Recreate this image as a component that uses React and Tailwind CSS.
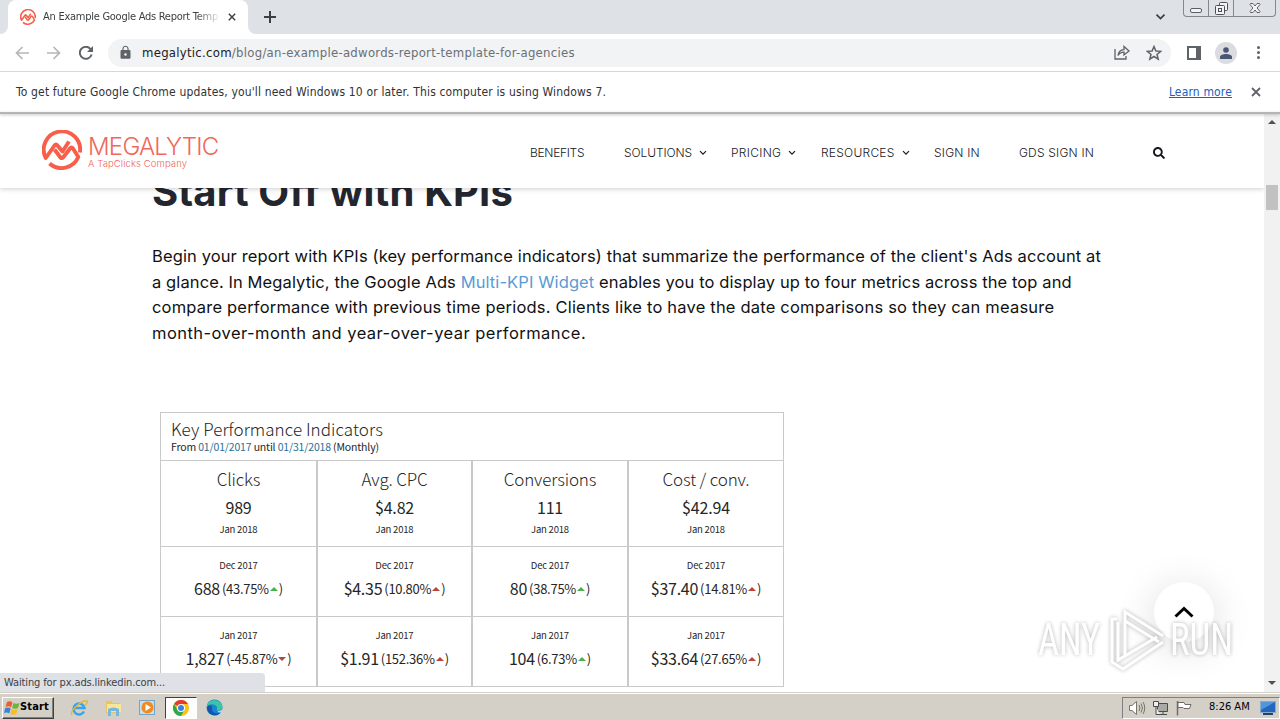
import { FaSearch } from 'react-icons/fa';
import { MdLock } from 'react-icons/md';

const navItems = [
  { label: 'BENEFITS', box: 'w-[94px]', track: 'tracking-[-0.3px]' },
  { label: 'SOLUTIONS', box: 'w-[107px]', menu: true, track: 'tracking-[-0.1px]' },
  { label: 'PRICING', box: 'w-[90px]', menu: true, track: 'tracking-[0.3px]' },
  { label: 'RESOURCES', box: 'w-[113px]', menu: true, track: 'tracking-[0.25px]' },
  { label: 'SIGN IN', box: 'w-[85px]', track: 'tracking-[0.2px]' },
  { label: 'GDS SIGN IN', box: 'w-[134px]', track: 'tracking-[0.2px]' },
];

const kpis = [
  {
    name: 'Clicks',
    value: '989',
    prev: { value: '688', pct: '43.75%', dir: 'up', color: '#4caf50' },
    year: { value: '1,827', pct: '-45.87%', dir: 'down', color: '#b5463f' },
  },
  {
    name: 'Avg. CPC',
    value: '$4.82',
    prev: { value: '$4.35', pct: '10.80%', dir: 'up', color: '#c0443c' },
    year: { value: '$1.91', pct: '152.36%', dir: 'up', color: '#c0443c' },
  },
  {
    name: 'Conversions',
    value: '111',
    prev: { value: '80', pct: '38.75%', dir: 'up', color: '#4caf50' },
    year: { value: '104', pct: '6.73%', dir: 'up', color: '#4caf50' },
  },
  {
    name: 'Cost / conv.',
    value: '$42.94',
    prev: { value: '$37.40', pct: '14.81%', dir: 'up', color: '#c0443c' },
    year: { value: '$33.64', pct: '27.65%', dir: 'up', color: '#c0443c' },
  },
];

const MegaLogo = ({ className }) => (
  <svg className={className} viewBox="0 0 40 40" fill="none" stroke="#f75f4a" strokeLinejoin="round">
    <path d="M37.900 22.500A18.200 18.200 0 1 0 3.800 28L12.500 15.500Q14 13.500 15.500 15.500L20.500 21.500L27 11.500" strokeWidth="3.900" />
    <path d="M12.500 19.500L18.500 27.500Q20 29 21.500 27L28 18.500Q29.500 16.500 31 18.500L36.300 27A18.200 18.200 0 0 1 7.500 33.500" strokeWidth="3.900" />
  </svg>
);

const Chevron = ({ className, width = 1.5 }) => (
  <svg className={className} viewBox="0 0 8 6" fill="none" stroke="currentColor" strokeWidth={width}>
    <path d="M1 1.200L4 4.200L7 1.200" />
  </svg>
);

const Cross = ({ className }) => (
  <svg className={className} viewBox="0 0 10 10" fill="none" stroke="currentColor" strokeWidth="1.8">
    <path d="M1 1L9 9M9 1L1 9" />
  </svg>
);

const TabStrip = () => (
  <div className="flex h-[34px] bg-[#dee1e6]">
    <div className="flex w-2 bg-white">
      <div className="h-full w-2 rounded-br-lg bg-[#dee1e6]" />
    </div>
    <div className="flex w-60 items-center rounded-t-lg bg-white pl-3">
      <MegaLogo className="h-4 w-4 shrink-0" />
      <div className="ml-[7px] w-[178px] whitespace-nowrap text-[11px] tracking-[-0.26px] text-[#3c4043] [mask-image:linear-gradient(to_right,black_86%,transparent_100%)]">
        An Example Google Ads Report Temp
      </div>
      <Cross className="ml-[7px] h-2 w-2 text-[#3c4043]" />
    </div>
    <div className="w-2 bg-white">
      <div className="h-full w-2 rounded-bl-lg bg-[#dee1e6]" />
    </div>
    <svg className="ml-2 mt-[11px] h-3 w-3" viewBox="0 0 12 12" stroke="#3c4043" strokeWidth="2">
      <path d="M6 0V12M0 6H12" />
    </svg>
    <Chevron className="ml-auto mr-[17px] mt-[13px] h-[8px] w-[11px] text-[#3c4043]" width={1.3} />
    <div className="mr-[4px] flex h-[17px] w-[93px] rounded-b-[4px] border border-t-0 border-[#84878e]">
      <div className="flex w-[25px] justify-center border-r border-[#84878e]">
        <div className="mt-[8px] h-[5px] w-3 rounded-[2px] border border-[#5c5f66] bg-[#f2f3f5]" />
      </div>
      <div className="flex w-[25px] justify-center border-r border-[#84878e]">
        <svg className="mt-[2px] h-[13px] w-[13px]" viewBox="0 0 13 13" fill="#f2f3f5" stroke="#4c4f56">
          <rect x="4.500" y=".5" width="8" height="8" rx="1" />
          <rect x=".5" y="3.500" width="9" height="9" rx="1" />
          <rect x="3.500" y="6.500" width="3" height="3" />
        </svg>
      </div>
      <div className="flex flex-1 justify-center">
        <svg className="mt-[3px] h-[10px] w-[12px]" viewBox="0 0 12 10">
          <path
            d="M1.500 .5H4L6 3L8 .5H10.500L11 1.500L8 5L11 8.500L10.500 9.500H8L6 7L4 9.500H1.500L1 8.500L4 5L1 1.500Z"
            fill="#f5f6f7"
            stroke="#5c5f66"
          />
        </svg>
      </div>
    </div>
  </div>
);

const Toolbar = () => (
  <div className="flex h-[38px] items-center border-b border-[#d5d7da] bg-white pl-[15px]">
    <svg className="h-[14px] w-[14px]" viewBox="0 0 14 14" fill="none" stroke="#b4b6b9" strokeWidth="1.7">
      <path d="M14 7H1.500M7.500 1L1.500 7L7.500 13" />
    </svg>
    <svg className="ml-[18px] h-[14px] w-[14px]" viewBox="0 0 14 14" fill="none" stroke="#b4b6b9" strokeWidth="1.7">
      <path d="M0 7H12.500M6.500 1L12.500 7L6.500 13" />
    </svg>
    <svg className="ml-[18px] h-[14px] w-[14px]" viewBox="0 0 14 14" fill="none" stroke="#5f6368" strokeWidth="2">
      <path d="M12.600 8.500A6 6 0 1 1 11.300 2.800L12 3.600" />
      <path d="M14 0V6H8Z" fill="#5f6368" stroke="none" />
    </svg>
    <div className="ml-[15px] flex h-7 w-[1063px] items-center rounded-full bg-[#f1f3f4] pl-[10px] pr-[9px]">
      <MdLock className="h-[15px] w-[15px] text-[#5f6368]" />
      <span className="ml-[9px] whitespace-nowrap text-[13px] tracking-[0.27px] text-[#6b6f74]">
        <span className="text-[#202124]">megalytic.com</span>/blog/an-example-adwords-report-template-for-agencies
      </span>
      <svg className="ml-auto h-[15px] w-[16px]" viewBox="0 0 16 15" fill="none" stroke="#5f6368" strokeWidth="1.300">
        <path d="M1 4V14H12V11" />
        <path d="M4 10.500C4.500 6.500 7 4.800 10 4.600V1.500L15 6L10 10V7.200C7.500 7.200 5.500 8 4 10.500Z" />
      </svg>
      <svg className="ml-4 h-[16px] w-[16px]" viewBox="0 0 16 16" fill="none" stroke="#5f6368" strokeWidth="1.5">
        <path d="M8 1.500L9.900 6L14.700 6.300L11 9.400L12.200 14.100L8 11.500L3.800 14.100L5 9.400L1.300 6.300L6.100 6Z" />
      </svg>
    </div>
    <svg className="ml-4 h-[14px] w-[14px]" viewBox="0 0 14 14">
      <rect x="1" y="1" width="12" height="12" fill="none" stroke="#5f6368" strokeWidth="2" />
      <rect x="9" y="1" width="4" height="12" fill="#5f6368" />
    </svg>
    <div className="ml-[14px] flex h-[22px] w-[22px] items-center justify-center rounded-full bg-[#dadce0]">
      <svg className="h-3 w-3" viewBox="0 0 12 12" fill="#4a5672">
        <circle cx="6" cy="3" r="2.800" />
        <path d="M0 12V10C0 8 3 7 6 7S12 8 12 10V12Z" />
      </svg>
    </div>
    <div className="ml-[20px] flex flex-col gap-[2px]">
      <div className="h-[3px] w-[3px] rounded-full bg-[#5f6368]" />
      <div className="h-[3px] w-[3px] rounded-full bg-[#5f6368]" />
      <div className="h-[3px] w-[3px] rounded-full bg-[#5f6368]" />
    </div>
  </div>
);

const InfoBar = () => (
  <div className="flex h-10 items-center bg-white pl-4 pr-[19px] text-[12px] tracking-[0.16px] text-[#303235]">
    <span>To get future Google Chrome updates, you'll need Windows 10 or later. This computer is using Windows 7.</span>
    <a className="ml-auto text-[#2360b8] underline">Learn more</a>
    <Cross className="ml-[19px] h-[10px] w-[10px] text-[#5f6368]" />
  </div>
);

const SiteHeader = () => (
  <header className="relative z-10 flex h-[74px] shrink-0 items-center bg-white pl-[42px] shadow-[0_1px_5px_rgba(0,0,0,0.2)]">
    <MegaLogo className="-mt-[2px] h-10 w-10" />
    <div className="ml-[6px] flex w-[442px] flex-col whitespace-nowrap text-[#f0685a]">
      <span className="mt-[2px] text-[24px] font-light leading-[22px] tracking-[-0.75px]">MEGALYTIC</span>
      <span className="mt-px text-[9.5px] font-light leading-[10px] tracking-[0.1px]">A TapClicks Company</span>
    </div>
    <nav className="mt-[3px] flex items-center text-[12px] font-light text-[#16181d]">
      {navItems.map((item) => (
        <div key={item.label} className={`flex items-center whitespace-nowrap ${item.box}`}>
          <span className={item.track}>{item.label}</span>
          {item.menu && <Chevron className="ml-[7px] h-[6px] w-[8px]" width={1.2} />}
        </div>
      ))}
      <FaSearch className="h-3 w-3" />
    </nav>
  </header>
);

const Article = () => (
  <article className="flex flex-col pl-[152px] text-[#111]">
    <h2 className="-mt-[16px] h-[40px] whitespace-nowrap text-[40px] font-bold leading-[40px] tracking-[0.15px] text-[#23262f]">
      Start Off with KPIs
    </h2>
    <div className="mt-[32px] whitespace-nowrap text-[16.5px] leading-[25.6px]">
      <p className="tracking-[0.12px]">
        Begin your report with KPIs (key performance indicators) that summarize the performance of the client's Ads account at
      </p>
      <p className="tracking-[0.1px]">
        a glance. In Megalytic, the Google Ads <a className="text-[#5a9bd5]">Multi-KPI Widget</a> enables you to display up to four metrics across the top and
      </p>
      <p className="tracking-[0.195px]">
        compare performance with previous time periods. Clients like to have the date comparisons so they can measure
      </p>
      <p className="tracking-[0.45px]">month-over-month and year-over-year performance.</p>
    </div>
  </article>
);

const Triangle = ({ dir, color }) => (
  <svg className="mx-px mt-px h-[4px] w-[8px]" viewBox="0 0 8 4" fill={color}>
    <path d={dir === 'up' ? 'M4 0L8 4H0Z' : 'M0 0H8L4 4Z'} />
  </svg>
);

const Comparison = ({ label, data }) => (
  <div className="flex h-[70px] flex-col items-center border-b border-[#c9c9c9] pt-[11px]">
    <span className="text-[9.5px] leading-[14px] tracking-[-0.2px]">{label}</span>
    <div className="mt-[6px] flex h-5 items-center leading-[20px] tracking-[-0.27px]">
      <span className="text-[16px]">{data.value}</span>
      <span className="ml-[2px] mt-px text-[13px]">({data.pct}</span>
      <Triangle dir={data.dir} color={data.color} />
      <span className="mt-px text-[13px]">)</span>
    </div>
  </div>
);

const KpiWidget = () => (
  <section className="ml-[160px] mt-[66px] w-[624px] shrink-0 border border-b-0 border-[#c9c9c9] font-['Noto_Sans_CJK_SC',sans-serif] text-[#262626]">
    <div className="flex h-[48px] flex-col border-b border-[#c9c9c9] pl-[10px]">
      <h3 className="mt-[6px] text-[17px] font-light leading-[20px] tracking-[0.06px]">Key Performance Indicators</h3>
      <p className="mt-px text-[10.5px] leading-[14px] tracking-[-0.16px]">
        From <span className="text-[#2b7094]">01/01/2017</span> until <span className="text-[#2b7094]">01/31/2018</span> (Monthly)
      </p>
    </div>
    <div className="grid grid-cols-[157px_155px_156px_154px] divide-x-2 divide-[#c9c9c9]">
      {kpis.map((kpi) => (
        <div key={kpi.name}>
          <div className="flex h-[86px] flex-col items-center border-b border-[#c9c9c9] pt-[8px]">
            <span className="text-[17px] font-light leading-5 tracking-[-0.15px]">{kpi.name}</span>
            <span className="mt-[8px] text-[16px] leading-5 tracking-[-0.17px]">{kpi.value}</span>
            <span className="mt-[5px] text-[9.5px] leading-[14px] tracking-[-0.2px]">Jan 2018</span>
          </div>
          <Comparison label="Dec 2017" data={kpi.prev} />
          <Comparison label="Jan 2017" data={kpi.year} />
        </div>
      ))}
    </div>
  </section>
);

const ScrollBar = () => (
  <div className="flex w-4 flex-col items-center justify-between bg-[#f1f1f1] pb-[7px] pt-[6px]">
    <svg className="h-[4px] w-[8px]" viewBox="0 0 8 4" fill="#505050"><path d="M4 0L8 4H0Z" /></svg>
    <div className="mb-auto mt-[61px] h-[25px] w-3 bg-[#c1c1c1]" />
    <svg className="h-[4px] w-[8px]" viewBox="0 0 8 4" fill="#505050"><path d="M0 0H8L4 4Z" /></svg>
  </div>
);

const Watermark = () => (
  <div className="absolute left-[1038px] top-[608px] z-30 flex h-[64px] w-[200px] items-center font-[Roboto,sans-serif] text-[45px] leading-[64px] text-white opacity-90 [filter:drop-shadow(0_0_2px_rgba(0,0,0,0.32))]">
    <span className="w-[69px] shrink-0"><span className="inline-block origin-left scale-x-[0.81]">ANY</span></span>
    <svg className="h-[64px] w-[60px] shrink-0" viewBox="0 0 60 64" fill="none" stroke="#fff" strokeWidth="3">
      <path d="M18 49V4L56 28" />
      <path d="M18 13L52 34" />
      <path d="M10 11H5V54L16 61L56 34" />
      <path d="M11 14V52L50 29" />
    </svg>
    <span className="ml-[3px]"><span className="inline-block origin-left scale-x-[0.82]">RUN</span></span>
  </div>
);

const Taskbar = () => (
  <div className="flex h-7 shrink-0 items-center border-t border-[#d4d0c8] bg-[#d4d0c8] pl-[2px] pt-[2px] text-black shadow-[inset_0_1px_0_#fff]">
    <button className="flex h-[22px] w-[52px] items-center border border-b-[#404040] border-l-white border-r-[#404040] border-t-white pl-px shadow-[inset_-1px_-1px_0_#808080]">
      <svg className="h-4 w-4 shrink-0" viewBox="0 0 16 16">
        <path d="M3 2C5 1 7 1 8.500 2.500L7 7.500C5.500 6 3.500 6 1.500 7Z" fill="#e8602c" />
        <path d="M9.500 3C11.500 4 13.500 4 15.500 3L14 8C12 9 10 9 8 8Z" fill="#6fb33f" />
        <path d="M1.200 8C3.500 7 5.500 7.500 6.700 8.500L5.200 13.500C4 12.500 2 12 0 13Z" fill="#3f82cf" />
        <path d="M7.700 9C9.500 10 11.500 10 13.700 9L12.200 14C10.500 15 8 15 6.200 14Z" fill="#f7bd24" />
      </svg>
      <span className="text-[11px] font-bold tracking-[0.17px]">Start</span>
    </button>
    <svg className="ml-[16px] h-[18px] w-[18px]" viewBox="0 0 18 18" fill="none">
      <path d="M14 12.500A5.500 5.500 0 1 1 14.500 9H4.500" stroke="#3ba3e6" strokeWidth="2.500" />
      <path d="M2 16C-1 12 13 0 17 2C18 3 16.500 5 15.500 6" stroke="#e5b63c" strokeWidth="1.400" />
    </svg>
    <svg className="ml-[17px] h-[18px] w-[17px]" viewBox="0 0 17 18">
      <path d="M1 2H7L8 4H15V14H1Z" fill="#e8c55e" />
      <path d="M2 5H16V13H2Z" fill="#f8e59c" />
      <path d="M3 17V10Q8.500 7 14 10V17H11V12H6V17Z" fill="#72b8e3" />
    </svg>
    <svg className="ml-[17px] h-[17px] w-[17px]" viewBox="0 0 17 17">
      <rect x=".5" y="1.500" width="15" height="14" fill="#c3dff4" stroke="#76a5ca" />
      <circle cx="8.500" cy="8.500" r="6" fill="#f28b1e" />
      <path d="M6.500 5L12 8.500L6.500 12Z" fill="#fff" />
    </svg>
    <div className="ml-[9px] flex h-[22px] w-[32px] items-center justify-center border border-b-white border-l-[#404040] border-r-white border-t-[#404040] bg-[#fdfdfc]">
      <svg className="h-4 w-4" viewBox="0 0 16 16">
        <circle cx="8" cy="8" r="8" fill="#fbc116" />
        <path d="M8 8L1.070 4A8 8 0 0 1 14.930 4H8Z" fill="#e33b2e" />
        <path d="M1.070 4A8 8 0 0 0 8 16L11.400 10L8 8L4.500 10Z" fill="#2da94f" />
        <circle cx="8" cy="8" r="4" fill="#fff" />
        <circle cx="8" cy="8" r="3" fill="#3f7ee8" />
      </svg>
    </div>
    <svg className="ml-[9px] h-[17px] w-[17px]" viewBox="0 0 17 17">
      <circle cx="8.500" cy="8.500" r="8" fill="#1785d2" />
      <path d="M1 6C3 0 14 -1 16.500 7C17 11 13 12 10.500 11C12 9 11 6 7 5.500C4 5 2 6 1 8Z" fill="#3ac6a4" />
      <path d="M6 8C5 13 9 15.500 14 14C11 18 2 17 1 9C2 6 5 6 6 8Z" fill="#1455a8" />
      <path d="M10.500 11C12 12.500 15 12 16.500 10V13L13 13.500Z" fill="#d4d0c8" />
    </svg>
    <div className="ml-auto flex h-[22px] w-[158px] items-center border border-b-white border-l-[#808080] border-r-white border-t-[#808080] pl-[5px]">
      <svg className="h-4 w-[18px]" viewBox="0 0 18 16" fill="none" stroke="#77746e">
        <path d="M1.500 5.500H4L8.500 1.500V14.500L4 10.500H1.500Z" fill="#fff" />
        <path d="M11 5Q13 8 11 11M13 3.500Q16 8 13 12.500M15 2Q18.500 8 15 14" />
      </svg>
      <svg className="ml-[6px] h-4 w-[17px]" viewBox="0 0 17 16">
        <path d="M5.500 3.500H15.500V11.500H5.500Z" fill="#a9a9a6" stroke="#4c4c4a" />
        <path d="M7 14.500H15M11 12V14" stroke="#4c4c4a" />
        <path d="M1.500 1.500H6.500V6.500H1.500Z M4 6.500V14.500H8" fill="#eee" stroke="#4c4c4a" />
      </svg>
      <svg className="ml-[7px] h-4 w-4" viewBox="0 0 16 16" fill="#fff" stroke="#6e6c67">
        <path d="M1.500 1V15.500" strokeWidth="1.500" />
        <path d="M2 2.500H8L9 4.500H15L13.500 8.500H8L7 7.500H2Z" />
      </svg>
      <span className="ml-[17px] whitespace-nowrap text-[11px]">8:26 AM</span>
      <svg className="ml-[10px] h-[14px] w-[16px]" viewBox="0 0 16 14">
        <rect x=".5" y=".5" width="15" height="11" fill="#2366bd" stroke="#8aa9cf" />
        <path d="M1 1H15L1 9Z" fill="#4f96dd" />
        <rect x="3" y="12" width="10" height="2" fill="#29415f" />
      </svg>
    </div>
  </div>
);

const App = () => {
  return (
    <div className="relative flex h-[720px] w-[1280px] flex-col overflow-hidden bg-white font-['DejaVu_Sans_Condensed','DejaVu_Sans',sans-serif] [font-stretch:condensed]">
      <TabStrip />
      <Toolbar />
      <InfoBar />
      <div className="relative z-20 h-[2px] shrink-0 bg-[#b4b4b4] shadow-[0_1px_3px_rgba(0,0,0,0.25)]" />
      <div className="flex min-h-0 flex-1 overflow-hidden">
        <main className="flex min-w-0 flex-1 flex-col overflow-hidden font-[Inter,sans-serif] [font-stretch:normal]">
          <SiteHeader />
          <Article />
          <KpiWidget />
        </main>
        <ScrollBar />
      </div>
      <Taskbar />

      {/* Link status bubble */}
      <div className="absolute bottom-7 left-0 h-[19px] w-[265px] rounded-tr-[4px] bg-[#dee1e6] pl-[4px] text-[11px] leading-[20px] tracking-[-0.12px] text-[#3c4043]">
        Waiting for px.ads.linkedin.com...
      </div>

      {/* Back to top */}
      <button className="absolute left-[1154px] top-[582px] flex h-[60px] w-[60px] items-center justify-center rounded-full bg-white shadow-[0_6px_40px_rgba(0,0,0,0.15)]">
        <svg className="h-3 w-5" viewBox="0 0 20 12" fill="none" stroke="#000" strokeWidth="3">
          <path d="M1.500 10.500L10 2.500L18.500 10.500" />
        </svg>
      </button>
      <Watermark />
    </div>
  );
};

export default App;
